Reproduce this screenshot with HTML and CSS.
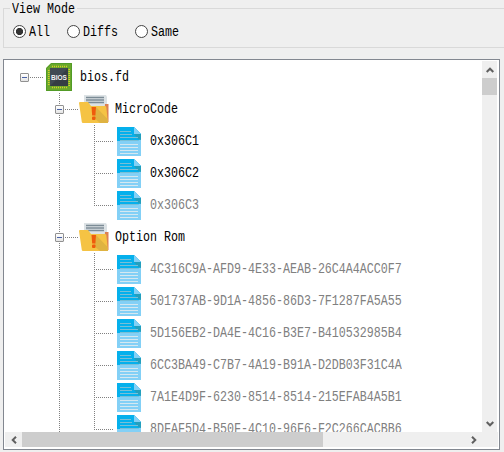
FILE: index.html
```
<!DOCTYPE html>
<html lang="en">
<head>
<meta charset="utf-8">
<title>View Mode</title>
<link rel="stylesheet" href="styles.css">
</head>
<body>
<svg class="symbols" aria-hidden="true">
  <symbol id="chip" viewBox="0 0 26 28">
    <path d="M5 0H26V28H0V5Z" fill="#6aa82c"/>
    <path d="M5.5 .5H25.5V27.5H.5V5.5Z" fill="none" stroke="#529b27"/>
    <path d="M6 3.5H22M6 24.5H22" stroke="#d8cc2a" stroke-width="1.6" stroke-dasharray="1 1"/>
    <path d="M2.8 7V23M23.2 6V23" stroke="#d8cc2a" stroke-width="1.6" stroke-dasharray="1 1"/>
    <rect x="4" y="5" width="18" height="18" fill="#353d44"/>
    <path d="M4 5H22L4 23Z" fill="#404a52"/>
    <text x="13" y="17" textLength="16" lengthAdjust="spacingAndGlyphs" text-anchor="middle" class="chip-text">BIOS</text>
  </symbol>
  <symbol id="folder" viewBox="0 0 30 28">
    <path d="M5 0H27L28 2V20H5Z" fill="#dce2e5"/>
    <path d="M7 2.5H25M7 5H25M7 7.5H25" stroke="#7c8c96" stroke-width="1.3"/>
    <path d="M26 9H29.5V27L25 28Z" fill="#dc8052"/>
    <path d="M0 8Q0 7 1 7H9L12 11H26Q27 11 27.3 12L29 28H4Q3 28 2.8 27Z" fill="#f5c344"/>
    <path d="M17 12L28.5 24L29 28H21L15 23Z" fill="#dfb341"/>
    <path d="M12.5 12H17L16.4 20.5H13.2Z" fill="#ef5b0c"/>
    <rect x="13" y="21.5" width="3.5" height="3.5" rx="1" fill="#ef5b0c"/>
  </symbol>
  <symbol id="doc" viewBox="0 0 24 29">
    <path d="M0 0H17L24 7V29H0Z" fill="#83d0f6"/>
    <path d="M0 0H17L24 7V12L20 14H0Z" fill="#05b0ec"/>
    <path d="M17 7H24V13L21 12Z" fill="#239fbd"/>
    <path d="M17 0L24 7H17Z" fill="#83d0f6"/>
    <path d="M3 4.5H14M3 7.5H15M3 10.5H21M3 13.5H21" stroke="#79bfd7"/>
    <path d="M3 17.5H21M3 20.5H21M3 23.5H21M3 26.5H21" stroke="#d5e8f1"/>
  </symbol>
  <symbol id="arrow" viewBox="0 0 8 6">
    <path d="M.7 5L4 1.7L7.3 5" fill="none" stroke="#606060" stroke-width="2"/>
  </symbol>
</svg>

<fieldset class="mode">
  <legend><span class="label">View Mode</span></legend>
  <div class="options">
    <div class="option all"><span class="radio checked"></span><span class="label">All</span></div>
    <div class="option diffs"><span class="radio"></span><span class="label">Diffs</span></div>
    <div class="option"><span class="radio"></span><span class="label">Same</span></div>
  </div>
</fieldset>

<main class="panel">
  <div class="tree">
    <div class="row"><i class="cell branch"><b class="toggle"></b></i><span class="icon"><svg width="26" height="28"><use href="#chip"/></svg></span><span class="label">bios.fd</span></div>
    <div class="row"><i class="cell"></i><i class="cell line branch"><b class="toggle"></b></i><span class="icon"><svg width="30" height="28"><use href="#folder"/></svg></span><span class="label">MicroCode</span></div>
    <div class="row"><i class="cell"></i><i class="cell line"></i><i class="cell line branch"></i><span class="icon"><svg width="24" height="29"><use href="#doc"/></svg></span><span class="label">0x306C1</span></div>
    <div class="row"><i class="cell"></i><i class="cell line"></i><i class="cell line branch"></i><span class="icon"><svg width="24" height="29"><use href="#doc"/></svg></span><span class="label">0x306C2</span></div>
    <div class="row muted"><i class="cell"></i><i class="cell line"></i><i class="cell line last branch"></i><span class="icon"><svg width="24" height="29"><use href="#doc"/></svg></span><span class="label">0x306C3</span></div>
    <div class="row"><i class="cell"></i><i class="cell line branch"><b class="toggle"></b></i><span class="icon"><svg width="30" height="28"><use href="#folder"/></svg></span><span class="label">Option Rom</span></div>
    <div class="row muted"><i class="cell"></i><i class="cell line"></i><i class="cell line branch"></i><span class="icon"><svg width="24" height="29"><use href="#doc"/></svg></span><span class="label">4C316C9A-AFD9-4E33-AEAB-26C4A4ACC0F7</span></div>
    <div class="row muted"><i class="cell"></i><i class="cell line"></i><i class="cell line branch"></i><span class="icon"><svg width="24" height="29"><use href="#doc"/></svg></span><span class="label">501737AB-9D1A-4856-86D3-7F1287FA5A55</span></div>
    <div class="row muted"><i class="cell"></i><i class="cell line"></i><i class="cell line branch"></i><span class="icon"><svg width="24" height="29"><use href="#doc"/></svg></span><span class="label">5D156EB2-DA4E-4C16-B3E7-B410532985B4</span></div>
    <div class="row muted"><i class="cell"></i><i class="cell line"></i><i class="cell line branch"></i><span class="icon"><svg width="24" height="29"><use href="#doc"/></svg></span><span class="label">6CC3BA49-C7B7-4A19-B91A-D2DB03F31C4A</span></div>
    <div class="row muted"><i class="cell"></i><i class="cell line"></i><i class="cell line branch"></i><span class="icon"><svg width="24" height="29"><use href="#doc"/></svg></span><span class="label">7A1E4D9F-6230-8514-8514-215EFAB4A5B1</span></div>
    <div class="row muted"><i class="cell"></i><i class="cell line"></i><i class="cell line last branch"></i><span class="icon"><svg width="24" height="29"><use href="#doc"/></svg></span><span class="label">8DFAF5D4-B50F-4C10-96F6-F2C266CACBB6</span></div>
  </div>
  <div class="vbar"><span class="button"><svg width="8" height="6"><use href="#arrow"/></svg></span><span class="thumb"></span><span class="button end"><svg class="down" width="8" height="6"><use href="#arrow"/></svg></span></div>
  <div class="hbar"><span class="button"><svg class="left" width="8" height="6"><use href="#arrow"/></svg></span><span class="thumb"></span><span class="button end"><svg class="right" width="8" height="6"><use href="#arrow"/></svg></span></div>
  <div class="corner"></div>
</main>
</body>
</html>
```
FILE: styles.css
```
* { box-sizing: border-box; }
html, body { height: 100%; }
body {
  margin: 0;
  overflow: hidden;
  background: #efefef;
  color: #000;
  font-family: "Liberation Mono", monospace;
  font-size: 11.665px;
}
.symbols { display: none; }
.chip-text {
  font: bold 6.5px "Liberation Sans", sans-serif;
  fill: #f2f2f2;
}
.label {
  display: block;
  line-height: 14px;
  white-space: pre;
  transform: scaleY(1.22);
}

.mode {
  width: 510px;
  height: 47px;
  margin: 1px 0 0 3px;
  padding: 0;
  border: 1px solid #d9d9d9;
}
.mode legend {
  height: 14px;
  margin-left: 6px;
  padding: 1px 2px 0;
}
.options { display: flex; padding: 9px 0 0 9px; }
.option { display: flex; align-items: center; gap: 3px; height: 15px; }
.option .label { padding-top: 1px; }
.option.all { width: 54px; }
.option.diffs { width: 68px; }
.radio {
  width: 13px;
  height: 13px;
  flex: none;
  border: 1px solid #444;
  border-radius: 50%;
  background: #fff;
}
.radio.checked { background: radial-gradient(circle, #333 0 3.2px, #fff 4px); }

.panel {
  display: grid;
  grid-template: 371px 16px / 478px 16px;
  width: 497px;
  height: 391px;
  margin: 11px 0 0 3px;
  padding: 1px 0 0;
  border: 1px solid #828790;
  background: #fff;
}
.tree { overflow: hidden; padding-left: 3px; }
.row { display: flex; align-items: center; height: 32px; }
.muted { color: #808080; }
.cell { position: relative; flex: none; width: 35px; height: 32px; }
.line {
  background: repeating-linear-gradient(#808080 0 1px, transparent 1px 2px) 17px 0 / 1px 100% no-repeat;
}
.line.last { background-size: 1px 17px; }
.branch::after {
  content: "";
  position: absolute;
  left: 17px;
  top: 16px;
  width: 20px;
  height: 1px;
  background: repeating-linear-gradient(90deg, #808080 0 1px, transparent 1px 2px);
}
.toggle {
  position: absolute;
  z-index: 1;
  left: 13px;
  top: 12px;
  width: 9px;
  height: 9px;
  border: 1px solid #919191;
  border-radius: 1px;
  background: linear-gradient(#4b63a7, #4b63a7) 1px 3px / 5px 1px no-repeat, linear-gradient(#fff, #e5e5e5);
  box-shadow: 0 0 0 1px #fff;
}
.icon {
  display: flex;
  justify-content: center;
  align-items: center;
  flex: none;
  width: 35px;
  height: 32px;
  margin-right: 3px;
  padding-right: 1px;
}

.vbar, .hbar { display: flex; background: #efefef; }
.vbar { flex-direction: column; width: 15px; }
.hbar { height: 15px; margin-left: 1px; }
.button { display: flex; flex: none; align-items: center; justify-content: center; width: 17px; height: 17px; }
.vbar .button { width: 15px; }
.hbar .button { width: 17px; height: 15px; }
.end { margin: auto 0 0; }
.hbar .end { margin: 0 0 0 auto; }
.thumb { background: #cdcdcd; }
.vbar .thumb { height: 17px; }
.hbar .thumb { width: 301px; }
.down { transform: rotate(180deg); }
.left { transform: rotate(-90deg); }
.right { transform: rotate(90deg); }
.corner { height: 15px; background: #efefef; }
```
